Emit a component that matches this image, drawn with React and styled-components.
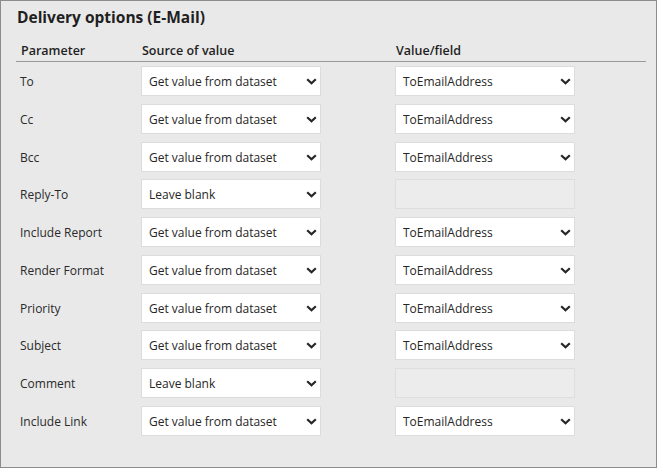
import styled, { createGlobalStyle } from "styled-components";

const GlobalStyle = createGlobalStyle`
  html, body {
    margin: 0;
    padding: 0;
    background: #ffffff;
  }
  body {
    font-family: "Open Sans", "Noto Sans", sans-serif;
    color: #262626;
  }
`;

const rows = [
  { label: "To", source: "Get value from dataset", field: "ToEmailAddress" },
  { label: "Cc", source: "Get value from dataset", field: "ToEmailAddress" },
  { label: "Bcc", source: "Get value from dataset", field: "ToEmailAddress" },
  { label: "Reply-To", source: "Leave blank", field: null },
  { label: "Include Report", source: "Get value from dataset", field: "ToEmailAddress" },
  { label: "Render Format", source: "Get value from dataset", field: "ToEmailAddress" },
  { label: "Priority", source: "Get value from dataset", field: "ToEmailAddress" },
  { label: "Subject", source: "Get value from dataset", field: "ToEmailAddress" },
  { label: "Comment", source: "Leave blank", field: null },
  { label: "Include Link", source: "Get value from dataset", field: "ToEmailAddress" },
];

const Panel = styled.div`
  box-sizing: border-box;
  width: 657px;
  height: 468px;
  border: 1px solid #8c8c8c;
  background: #e9e9e9;
  padding: 0 10px 0 15px;
`;

const Title = styled.h2`
  margin: 0;
  padding: 5px 0 0 1px;
  height: 28px;
  box-sizing: border-box;
  font-size: 15.5px;
  font-weight: 700;
  color: #1f1f1f;
`;

const Grid = styled.div`
  display: grid;
  grid-template-columns: 125px 254px 1fr;
`;

const Row = styled.div`
  display: contents;
`;

const HeadCell = styled.div`
  font-size: 12.5px;
  font-weight: 600;
  color: #1f1f1f;
  padding: 13px 0 0 ${(p) => p.$indent || 1}px;
  height: 33px;
  box-sizing: border-box;
  border-bottom: 1px solid #9a9a9a;
  margin-bottom: 4px;
`;

const Label = styled.div`
  font-size: 12px;
  color: #2a2a2a;
  padding-left: 4px;
  height: 30px;
  line-height: 31px;
  margin-bottom: 7.78px;
`;

const SelectWrap = styled.div`
  position: relative;
  width: 180px;
  height: 30px;
  margin-bottom: 7.78px;
`;

const Select = styled.select`
  appearance: none;
  -webkit-appearance: none;
  box-sizing: border-box;
  width: 100%;
  height: 100%;
  border: 1px solid #dcdcdc;
  border-radius: 0;
  background: #ffffff;
  font-family: "Open Sans", "Noto Sans", sans-serif;
  font-size: 12px;
  color: #262626;
  padding: 1px 24px 0 7px;
  outline: none;
`;

const Chevron = styled.svg`
  position: absolute;
  right: 4px;
  top: 12px;
  width: 11px;
  height: 7px;
  pointer-events: none;
`;

const EmptyBox = styled.div`
  box-sizing: border-box;
  width: 180px;
  height: 30px;
  margin-bottom: 7.78px;
  border: 1px solid #dedede;
  background: #ececec;
`;

const Dropdown = ({ value }) => (
  <SelectWrap>
    <Select defaultValue={value}>
      <option>{value}</option>
    </Select>
    <Chevron viewBox="0 0 11 7">
      <path d="M1.2 1.2 L5.5 5.3 L9.8 1.2" fill="none" stroke="#262626" strokeWidth="2.2" />
    </Chevron>
  </SelectWrap>
);

export default function App() {
  return (
    <>
      <GlobalStyle />
      <Panel>
        <Title>Delivery options (E-Mail)</Title>
        <Grid>
          <Row>
            <HeadCell $indent={5}>Parameter</HeadCell>
            <HeadCell $indent={1}>Source of value</HeadCell>
            <HeadCell $indent={1}>Value/field</HeadCell>
          </Row>
          {rows.map((r) => (
            <Row key={r.label}>
              <Label>{r.label}</Label>
              <Dropdown value={r.source} />
              {r.field ? <Dropdown value={r.field} /> : <EmptyBox />}
            </Row>
          ))}
        </Grid>
      </Panel>
    </>
  );
}
